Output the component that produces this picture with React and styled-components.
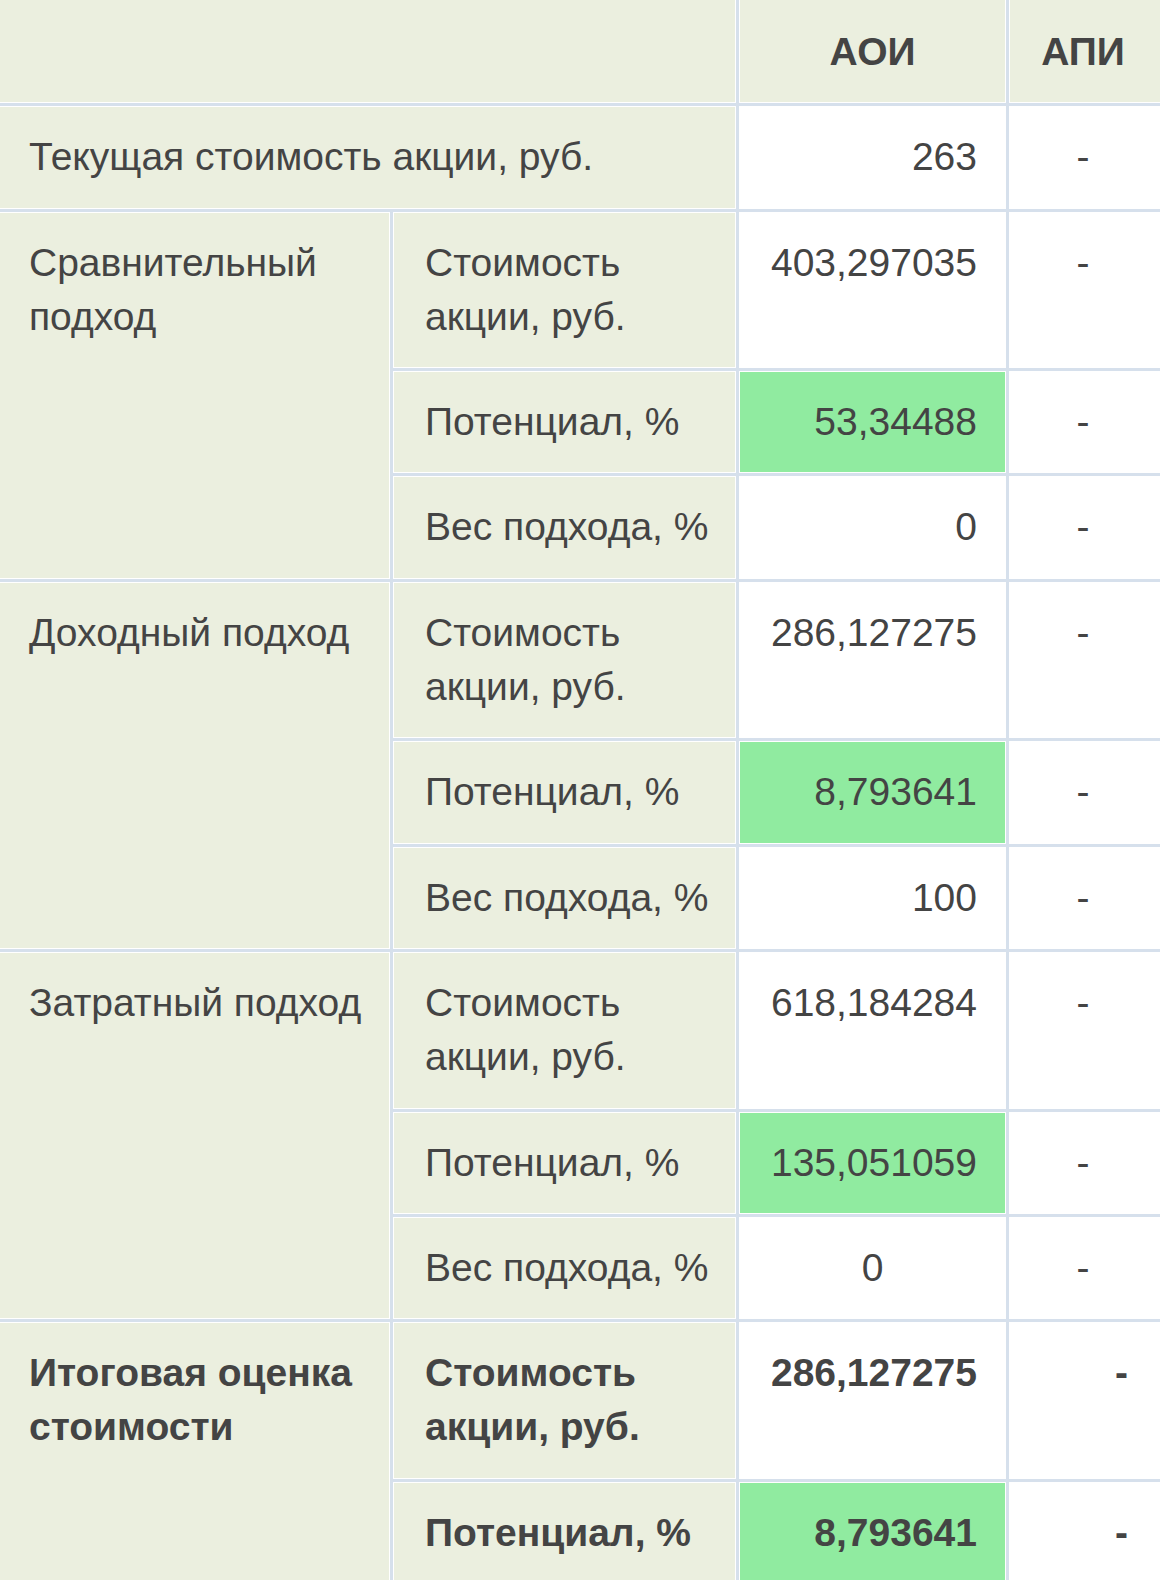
import React from "react";
import styled, { createGlobalStyle } from "styled-components";

const GlobalStyle = createGlobalStyle`
  html,
  body {
    margin: 0;
    padding: 0;
    background: #ffffff;
    overflow: hidden;
  }

  body {
    font-family: "Liberation Sans", Arial, sans-serif;
    color: #444444;
  }
`;

const Table = styled.table`
  /* the shot starts inside the outer spacing, so pull the edge off screen */
  margin: -4px 0 0 -4px;
  width: 1176px;
  table-layout: fixed;
  border-collapse: separate;
  border-spacing: 3px;
  background-color: #d6e0ec;

  font-size: 39px;
  line-height: 54.3px;
`;

const HeadCell = styled.th`
  border: 1px solid #ffffff;
  padding: ${({ $edge }) => ($edge ? "25px 40px 23px 28px" : "25px 28px 23px")};
  background-color: #ebefdf;

  font-weight: 700;
  text-align: center;
  vertical-align: middle;
`;

const LabelCell = styled.td`
  border: 1px solid #ffffff;
  padding: 23px 16px 23px ${({ $inner }) => ($inner ? "31px" : "29px")};
  background-color: #ebefdf;

  text-align: left;
  vertical-align: top;
  font-weight: ${({ $bold }) => ($bold ? 700 : 400)};
`;

const ValueCell = styled.td`
  border: 1px solid #ffffff;
  padding: 23px 28px;
  background-color: ${({ $good }) => ($good ? "#90eba0" : "#ffffff")};

  text-align: ${({ $align }) => $align || "right"};
  vertical-align: top;
  white-space: nowrap;
  font-weight: ${({ $bold }) => ($bold ? 700 : 400)};
`;

const DashCell = styled.td`
  border: 1px solid #ffffff;
  padding: 23px 40px 23px 28px;
  background-color: #ffffff;

  text-align: ${({ $bold }) => ($bold ? "right" : "center")};
  vertical-align: top;
  font-weight: ${({ $bold }) => ($bold ? 700 : 400)};
`;

const groups = [
  {
    title: "Сравнительный подход",
    rows: [
      { label: "Стоимость акции, руб.", value: "403,297035" },
      { label: "Потенциал, %", value: "53,34488", good: true },
      { label: "Вес подхода, %", value: "0" },
    ],
  },
  {
    title: "Доходный подход",
    rows: [
      { label: "Стоимость акции, руб.", value: "286,127275" },
      { label: "Потенциал, %", value: "8,793641", good: true },
      { label: "Вес подхода, %", value: "100" },
    ],
  },
  {
    title: "Затратный подход",
    rows: [
      { label: "Стоимость акции, руб.", value: "618,184284" },
      { label: "Потенциал, %", value: "135,051059", good: true },
      { label: "Вес подхода, %", value: "0", align: "center" },
    ],
  },
  {
    title: "Итоговая оценка стоимости",
    bold: true,
    rows: [
      { label: "Стоимость акции, руб.", value: "286,127275" },
      { label: "Потенциал, %", value: "8,793641", good: true },
    ],
  },
];

const App = () => {
  return (
    <>
      <GlobalStyle />
      <Table>
        <colgroup>
          <col style={{ width: 391 }} />
          <col style={{ width: 343 }} />
          <col style={{ width: 267 }} />
          <col style={{ width: 160 }} />
        </colgroup>
        <thead>
          <tr>
            <HeadCell colSpan={2} />
            <HeadCell>АОИ</HeadCell>
            <HeadCell $edge>АПИ</HeadCell>
          </tr>
        </thead>
        <tbody>
          <tr>
            <LabelCell colSpan={2}>Текущая стоимость акции, руб.</LabelCell>
            <ValueCell>263</ValueCell>
            <DashCell>-</DashCell>
          </tr>
          {groups.map((group) =>
            group.rows.map((row, i) => (
              <tr key={group.title + row.label}>
                {i === 0 && (
                  <LabelCell rowSpan={group.rows.length} $bold={group.bold}>
                    {group.title}
                  </LabelCell>
                )}
                <LabelCell $inner $bold={group.bold}>
                  {row.label}
                </LabelCell>
                <ValueCell
                  $good={row.good}
                  $align={row.align}
                  $bold={group.bold}
                >
                  {row.value}
                </ValueCell>
                <DashCell $bold={group.bold}>-</DashCell>
              </tr>
            ))
          )}
        </tbody>
      </Table>
    </>
  );
};

export default App;
